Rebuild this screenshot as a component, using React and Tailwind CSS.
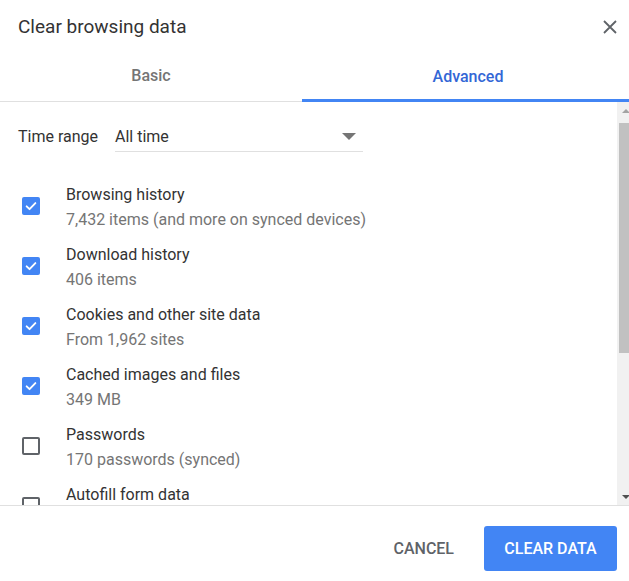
import React from "react";

const font = { fontFamily: "Roboto, 'Liberation Sans', sans-serif" };

function Check({ checked }) {
  if (checked) {
    return (
      <div className="w-[18px] h-[18px] rounded-[2px] bg-[#4285f4] flex items-center justify-center shrink-0">
        <svg width="14" height="14" viewBox="0 0 24 24">
          <path d="M4.5 12.5l5 5 10-10.5" fill="none" stroke="white" strokeWidth="3.2" strokeLinecap="round" strokeLinejoin="round" />
        </svg>
      </div>
    );
  }
  return <div className="w-[18px] h-[18px] rounded-[2px] border-2 border-[#5f6368] shrink-0" />;
}

const items = [
  ["Browsing history", "7,432 items (and more on synced devices)", true],
  ["Download history", "406 items", true],
  ["Cookies and other site data", "From 1,962 sites", true],
  ["Cached images and files", "349 MB", true],
  ["Passwords", "170 passwords (synced)", false],
  ["Autofill form data", "", false],
];

export default function App() {
  return (
    <div className="w-[629px] h-[581px] overflow-hidden bg-white" style={font}>
      <div className="w-[634px] h-[581px] flex flex-col">
        <div className="h-[54px] flex items-center justify-between pl-[18px] pr-[17px] shrink-0">
          <div className="text-[19px] text-[#333333]">Clear browsing data</div>
          <svg width="14" height="14" viewBox="0 0 14 14">
            <path d="M1 1L13 13M13 1L1 13" stroke="#5f6368" strokeWidth="1.8" />
          </svg>
        </div>
        <div className="h-[48px] flex border-b border-[#e0e0e0] shrink-0">
          <div className="w-[302px] flex items-center justify-center text-[16px] font-medium text-[#757575] pb-[3px]">Basic</div>
          <div className="flex-1 flex items-center justify-center text-[16px] font-medium text-[#3367d6] border-b-[3px] border-[#4285f4] -mb-px">Advanced</div>
        </div>
        <div className="h-[403px] flex shrink-0 overflow-hidden">
          <div className="flex-1 overflow-hidden pl-[18px]">
            <div className="pt-[20px] flex items-center h-[50px] box-border">
              <div className="text-[16px] text-[#333333] w-[97px]">Time range</div>
              <div className="w-[248px] h-[30px] border-b border-[#e0e0e0] flex items-center justify-between pr-[7px]">
                <span className="text-[16px] text-[#333333]">All time</span>
                <svg width="14" height="7" viewBox="0 0 14 7">
                  <path d="M0 0H14L7 7Z" fill="#757575" />
                </svg>
              </div>
            </div>
            <div className="mt-[24px] flex flex-col">
              {items.map(([label, sub, checked]) => (
                <div key={label} className="h-[60px] flex items-center shrink-0">
                  <div className="ml-[4px] mr-[26px]">
                    <Check checked={checked} />
                  </div>
                  <div className="leading-[25px] text-[16px] self-start pt-[6px]">
                    <div className="text-[#333333]">{label}</div>
                    {sub && <div className="text-[#757575]">{sub}</div>}
                  </div>
                </div>
              ))}
            </div>
          </div>
          <div className="w-[17px] bg-[#f1f1f1] flex flex-col shrink-0">
            <div className="h-[17px] flex items-center justify-center">
              <svg width="8" height="4" viewBox="0 0 8 4"><path d="M0 4L4 0L8 4Z" fill="#a3a3a3" /></svg>
            </div>
            <div className="mt-[4px] mx-[2px] h-[230px] bg-[#c1c1c1]" />
            <div className="flex-1" />
            <div className="h-[17px] flex items-center justify-center">
              <svg width="8" height="4" viewBox="0 0 8 4"><path d="M0 0L8 0L4 4Z" fill="#505050" /></svg>
            </div>
          </div>
        </div>
        <div className="border-t border-[#e0e0e0] flex-1 flex justify-end items-start pt-[20px] pr-[17px]">
          <div className="h-[45px] flex items-center text-[16px] font-medium text-[#5f6368] mr-[30px]">CANCEL</div>
          <div className="h-[45px] w-[133px] rounded-[3px] bg-[#4285f4] flex items-center justify-center text-[16px] font-medium text-white">CLEAR DATA</div>
        </div>
      </div>
    </div>
  );
}
